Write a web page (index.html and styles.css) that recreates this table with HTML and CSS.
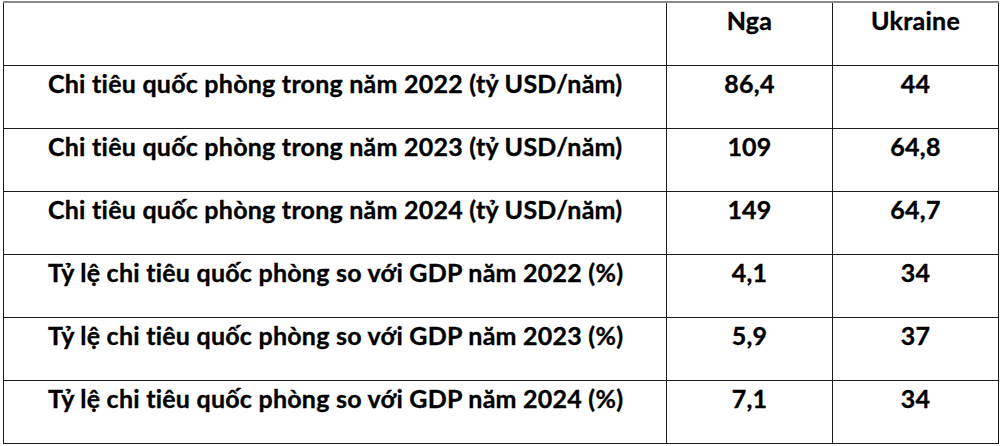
FILE: index.html
```html
<!DOCTYPE html>
<html lang="vi">
<head>
<meta charset="utf-8">
<link rel="stylesheet" href="styles.css">
</head>
<body>
<table class="data">
  <colgroup>
    <col class="c-label">
    <col class="c-val">
    <col class="c-val">
  </colgroup>
  <tr class="head">
    <td class="label"></td>
    <td class="val">Nga</td>
    <td class="val">Ukraine</td>
  </tr>
  <tr><td class="label">Chi tiêu quốc phòng trong năm 2022 (tỷ USD/năm)</td><td class="val">86,4</td><td class="val">44</td></tr>
  <tr><td class="label">Chi tiêu quốc phòng trong năm 2023 (tỷ USD/năm)</td><td class="val">109</td><td class="val">64,8</td></tr>
  <tr><td class="label">Chi tiêu quốc phòng trong năm 2024 (tỷ USD/năm)</td><td class="val">149</td><td class="val">64,7</td></tr>
  <tr><td class="label">Tỷ lệ chi tiêu quốc phòng so với GDP năm 2022 (%)</td><td class="val">4,1</td><td class="val">34</td></tr>
  <tr><td class="label">Tỷ lệ chi tiêu quốc phòng so với GDP năm 2023 (%)</td><td class="val">5,9</td><td class="val">37</td></tr>
  <tr><td class="label">Tỷ lệ chi tiêu quốc phòng so với GDP năm 2024 (%)</td><td class="val">7,1</td><td class="val">34</td></tr>
</table>
</body>
</html>
```

FILE: styles.css
```css
html, body {
  margin: 0;
  padding: 0;
  background: #ffffff;
}
body {
  padding: 1px 0 0 3px;
}
.data {
  border-collapse: collapse;
  table-layout: fixed;
  width: 995px;
  font-family: Lato, "Open Sans", sans-serif;
  font-weight: 700;
  font-size: 25px;
  letter-spacing: 0.24px;
  line-height: 1.2;
  color: #000;
  -webkit-text-stroke: 0.35px #000;
  border-top: 2px solid #8a8a8a;
}
.c-label { width: 663px; }
.c-val { width: 166px; }
.data td {
  height: 63px;
  box-sizing: border-box;
  border: 1px solid #1a1a1a;
  vertical-align: top;
  padding: 2px 0 0 0;
}
.data tr:first-child td {
  border-top: 2px solid #8a8a8a;
  height: 63px;
}
.data td.label {
  padding-left: 44px;
  text-align: left;
}
.data td.val {
  text-align: center;
}
```
